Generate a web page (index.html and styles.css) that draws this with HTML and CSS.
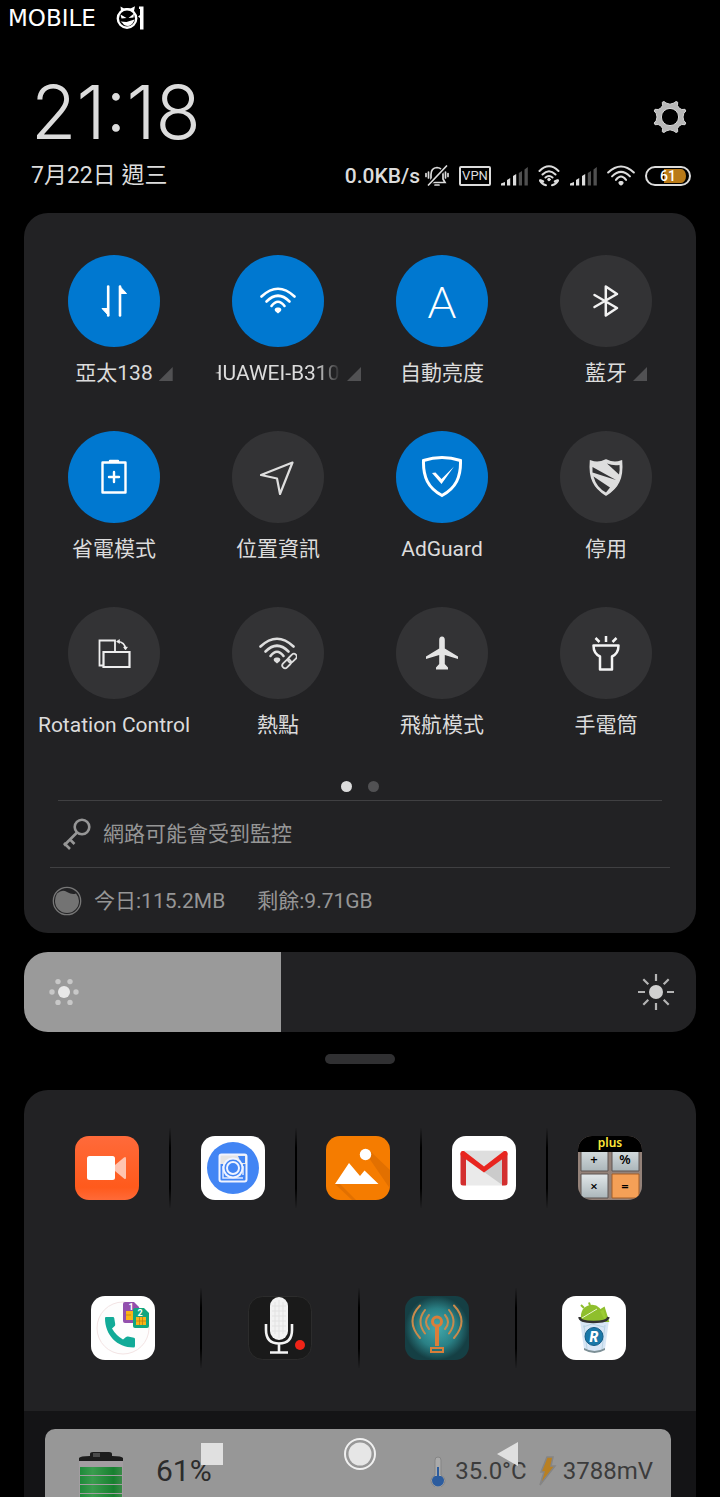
FILE: index.html
```
<!DOCTYPE html>
<html lang="zh-Hant">
<head>
    <meta charset="UTF-8">
    <meta name="viewport" content="width=device-width, initial-scale=1.0">
    <title>控制中心</title>
    <link rel="stylesheet" href="styles.css">
</head>
<body>
    <svg class="defs" width="0" height="0" aria-hidden="true">
        <symbol id="signal" viewBox="0 0 27 20">
            <path d="M0 19.500V17.500L4 16v3.500z M6 14l3.200-2v7.500H6z M12 10l3.200-2v11.500H12z" fill="#dcdcdc"/>
            <path d="M17.800 7L21 5v14.500h-3.200z M23.500 3.500L26.800 1v18.500h-3.300z" fill="#505050"/>
        </symbol>
        <symbol id="wifi" viewBox="0 0 36 28">
            <g fill="none" stroke="currentColor" stroke-width="2.600" stroke-linecap="round">
                <path d="M1.500 9.500Q18 -6 34.500 9.500"/>
                <path d="M6.500 14.500Q18 3 29.500 14.500"/>
                <path d="M11.500 19Q18 10.500 24.500 19"/>
            </g>
            <path d="M18 20.500c3.600 0 4 2.500 2.400 4L18 26.500l-2.400-2c-1.600-1.500-1.200-4 2.400-4z" fill="currentColor"/>
        </symbol>
    </svg>

    <div class="brand">
        <span class="brand-name">MOBILE</span>
        <svg width="28" height="26" viewBox="0 0 28 26">
            <path d="M4.500 1.500L8 3.500Q11 2.500 14.500 3.500L19 1.200 18 6 5 6z" fill="#fff"/>
            <circle cx="11" cy="13.500" r="9.200" fill="#000" stroke="#fff" stroke-width="2.400"/>
            <path d="M4.500 9.500l6 3.500-5 .500z M18 8.500l-5.500 4.500 5-.500z M4.500 16.500l6 .500 8-2.500q-2 6.500-6.500 6.500-4 0-5.500-3z" fill="#fff"/>
            <path d="M23 1.500h4.500v23H24V13l-2-1.500 2-1.500V4h-1z" fill="#fff"/>
        </svg>
    </div>

    <header class="header">
        <div class="clock-row">
            <time class="clock">21:18</time>
            <button class="settings" aria-label="設定">
                <svg width="34" height="34" viewBox="-17 -17 34 34">
                    <path d="M-6 -15.500L-4 -14 0 -12.800 4 -14 6 -15.500 7.700 -14.800 7.500 -11.500 9 -9 11.800 -7.500 15 -7.700 15.800 -6 13.800 -3.600 13 0 13.800 3.600 15.800 6 15 7.700 11.800 7.500 9 9 7.500 11.500 7.700 14.800 6 15.500 4 14 0 12.800 -4 14 -6 15.500 -7.700 14.800 -7.500 11.500 -9 9 -11.800 7.500 -15 7.700 -15.800 6 -13.800 3.600 -13 0 -13.800 -3.600 -15.800 -6 -15 -7.700 -11.800 -7.500 -9 -9 -7.500 -11.500 -7.700 -14.800z" fill="#b8b8b8" stroke="#d6d6d6" stroke-width="1" stroke-linejoin="round"/>
                    <circle r="8.600" fill="#000" stroke="#d6d6d6"/>
                </svg>
            </button>
        </div>
        <div class="status-row">
            <span class="date">7月22日 週三</span>
            <div class="status-icons">
                <span class="speed">0.0KB/s
                    <svg width="24" height="22" viewBox="0 0 24 22" fill="none" stroke="#dcdcdc" stroke-width="1.700" stroke-linecap="round">
                        <path d="M6 15.500V9.500Q6 3 12 2.500 18 3 18 9.500V14l2 3.500H4.500z"/>
                        <path d="M10 20h4"/>
                        <path d="M21.500 1.500L3 20" stroke="#000" stroke-width="4"/>
                        <path d="M21.500 1L3.500 20M3.500 7v6M1 8.500v3M20.500 7v6M23 8.500v3"/>
                    </svg>
                </span>
                <span class="vpn">VPN</span>
                <svg width="27" height="20"><use href="#signal"/></svg>
                <svg width="22" height="22" viewBox="0 0 22 22" fill="none" stroke="#dcdcdc" stroke-width="2" stroke-linecap="round">
                    <path d="M1.500 6Q11 -3.500 20.500 6M4.500 9.500Q11 3 17.500 9.500M7.500 12.500Q11 9.500 14.500 12.500"/>
                    <circle cx="11" cy="14.500" r="1.300" fill="#dcdcdc" stroke-width="1"/>
                    <path d="M2 15.500Q3.500 19 8 20.200M20 15.500Q18.500 19 14 20.200"/>
                    <path d="M2.500 15.500l2.500 1M19.500 15.500l-2.500 1" stroke-width="2.500"/>
                </svg>
                <svg width="27" height="20"><use href="#signal"/></svg>
                <svg width="28" height="22"><use href="#wifi"/></svg>
                <span class="battery">61</span>
            </div>
        </div>
    </header>

    <main>
        <section class="panel toggles-panel">
            <div class="toggles">
                <button class="toggle on">
                    <span class="disc">
                        <svg width="40" height="40" viewBox="0 0 40 40" fill="none" stroke="#fff" stroke-width="2.600" stroke-linecap="round">
                            <path d="M14.200 5.500V34.500"/><path d="M14.500 34.500L8 27.500h6z" fill="#fff" stroke-width="1"/>
                            <path d="M26 34.500V5.500"/><path d="M26 5.500L32.500 12.500h-6z" fill="#fff" stroke-width="1"/>
                        </svg>
                    </span>
                    <span class="label more">亞太138</span>
                </button>
                <button class="toggle on">
                    <span class="disc"><svg width="36" height="28"><use href="#wifi"/></svg></span>
                    <span class="label more"><span class="marquee">HUAWEI-B310</span></span>
                </button>
                <button class="toggle on">
                    <span class="disc"><span class="auto">A</span></span>
                    <span class="label">自動亮度</span>
                </button>
                <button class="toggle">
                    <span class="disc">
                        <svg width="40" height="40" viewBox="0 0 40 40" fill="none" stroke="#f2f2f2" stroke-width="2.500" stroke-linecap="round" stroke-linejoin="round">
                            <path d="M8.500 14L31 27 19.800 34.500V5.500L31 13 8.500 26"/>
                        </svg>
                    </span>
                    <span class="label more">藍牙</span>
                </button>
                <button class="toggle on">
                    <span class="disc">
                        <svg width="40" height="40" viewBox="0 0 40 40" fill="none" stroke="#fff" stroke-width="2.400" stroke-linejoin="round" stroke-linecap="round">
                            <path d="M8.500 5.500h23v30h-23zM16 4h8M20 15v10M15 20h10"/>
                        </svg>
                    </span>
                    <span class="label">省電模式</span>
                </button>
                <button class="toggle">
                    <span class="disc">
                        <svg width="40" height="40" viewBox="0 0 40 40" fill="none" stroke="#dedede" stroke-width="2.200" stroke-linejoin="round">
                            <path d="M34.500 5.500L3 18l16 3.500 3 15.500z"/>
                        </svg>
                    </span>
                    <span class="label">位置資訊</span>
                </button>
                <button class="toggle on">
                    <span class="disc">
                        <svg width="44" height="44" viewBox="0 0 44 44">
                            <path d="M3.500 5.500Q22 -0.500 40.500 5.500C41 22 36 33 22 40.500 8 33 3 22 3.500 5.500z" fill="none" stroke="#fff" stroke-width="3"/>
                            <path d="M12 18l3.500-.5 6 6.500L34 11.500 21.500 29z" fill="#fff"/>
                        </svg>
                    </span>
                    <span class="label">AdGuard</span>
                </button>
                <button class="toggle">
                    <span class="disc">
                        <svg width="36" height="40" viewBox="0 0 36 40">
                            <path d="M2.500 4Q10 7 18 3 26 7 33.500 4C35 21 30 31 18 38 6 31 1 21 2.500 4z" fill="#dedede" stroke="#dedede" stroke-width="1.500"/>
                            <path d="M19 6.500Q25 9 31.500 8 32 13 31 17.500z M4.500 10L28 23 4.500 15.500z M5.500 19.500L22 30.500 18 35.500Q8.500 30.500 5.500 19.500z" fill="#333335"/>
                        </svg>
                    </span>
                    <span class="label">停用</span>
                </button>
                <button class="toggle">
                    <span class="disc">
                        <svg width="40" height="40" viewBox="0 0 40 40" fill="none" stroke="#eee" stroke-width="1.800">
                            <path d="M21 18V7.500H5.500v25H9"/>
                            <path d="M9.500 19h26v15h-26z" stroke-width="2.200"/>
                            <path d="M23.500 8.500Q31 9 31.500 16" stroke-width="1.600"/>
                            <path d="M22.500 8.500l3-2v4z M31.500 17l-2-3h4z" fill="#eee" stroke-width=".5"/>
                        </svg>
                    </span>
                    <span class="label">Rotation Control</span>
                </button>
                <button class="toggle">
                    <span class="disc">
                        <svg width="38" height="34" viewBox="0 0 38 34" color="#dedede">
                            <use href="#wifi" y="1" width="36" height="28"/>
                            <g transform="rotate(-45 30.500 25)">
                                <rect x="20" y="21" width="21" height="8" rx="4" fill="#333335"/>
                                <g fill="none" stroke="#dedede" stroke-width="1.800">
                                    <rect x="21.500" y="22.200" width="10" height="5.600" rx="2.800"/>
                                    <rect x="29.500" y="22.200" width="10" height="5.600" rx="2.800"/>
                                </g>
                            </g>
                        </svg>
                    </span>
                    <span class="label">熱點</span>
                </button>
                <button class="toggle">
                    <span class="disc">
                        <svg width="40" height="40" viewBox="0 0 40 40">
                            <path d="M20 3.500q2.800 0 2.800 3.500v8.500L36 23.500v2.500l-13.200-4v9L26 34.500V36.500H14V34.500l3.200-3.500v-9L4 26v-2.500l13.200-8V7q0-3.500 2.800-3.500z" fill="#e4e4e4"/>
                        </svg>
                    </span>
                    <span class="label">飛航模式</span>
                </button>
                <button class="toggle">
                    <span class="disc">
                        <svg width="40" height="40" viewBox="0 0 40 40" fill="none" stroke="#f4f4f4" stroke-width="2.500" stroke-linejoin="round">
                            <path d="M7.500 12.500h25q0 8-6.500 11V36.500H14V23.500q-6.500-3-6.500-11z"/>
                            <path d="M20 3v6M9.500 5l4 4M30.500 5l-4 4"/>
                        </svg>
                    </span>
                    <span class="label">手電筒</span>
                </button>
            </div>
            <div class="pager"><i class="current"></i><i></i></div>
            <a class="info monitor" href="#">
                <svg width="30" height="32" viewBox="0 0 30 32" fill="none" stroke="#969696" stroke-width="2.600">
                    <circle cx="20" cy="9" r="7.300"/>
                    <path d="M15 14.500L2 27.500M2 25l6 6M7.500 21l5 5"/>
                </svg>
                <span>網路可能會受到監控</span>
            </a>
            <a class="info traffic" href="#">
                <svg width="30" height="30" viewBox="0 0 30 30">
                    <circle cx="15" cy="15" r="13.700" fill="none" stroke="#777" stroke-width="1.300"/>
                    <path d="M5 7.500Q10 3 15 6q5 3 9 1.500Q27 11 27 15a12 12 0 0 1-24 0Q3 11 5 7.500z" fill="#737373"/>
                </svg>
                <span>今日:115.2MB</span>
                <span class="remaining">剩餘:9.71GB</span>
            </a>
        </section>

        <div class="brightness">
            <input type="range" min="0" max="100" value="38" aria-label="亮度" style="--level: 38.2%">
            <svg class="sun-low" width="30" height="30" viewBox="-15 -15 30 30">
                <circle r="6" fill="#e8e8e8"/>
                <g fill="#c8c8c8">
                    <circle cx="-12" r="2.700"/><circle cx="12" r="2.700"/>
                    <circle cx="-6" cy="-10.400" r="2.700"/><circle cx="6" cy="-10.400" r="2.700"/>
                    <circle cx="-6" cy="10.400" r="2.700"/><circle cx="6" cy="10.400" r="2.700"/>
                </g>
            </svg>
            <svg class="sun-high" width="38" height="38" viewBox="-19 -19 38 38">
                <circle r="7" fill="#d0d0d0"/>
                <path d="M0 -18v7M0 18v-7M-18 0h7M18 0h-7M-12.700 -12.700l5 5M12.700 12.700l-5 -5M-12.700 12.700l5 -5M12.700 -12.700l-5 5" stroke="#b4b4b4" stroke-width="2.200"/>
            </svg>
        </div>

        <div class="handle"></div>

        <section class="panel apps">
            <div class="app-row">
                <a href="#" aria-label="螢幕錄影">
                    <svg width="64" height="64" viewBox="0 0 64 64">
                        <defs><linearGradient id="rec" x1="0" y1="0" x2="0" y2="1"><stop offset="0" stop-color="#ff6a3a"/><stop offset=".8" stop-color="#ff5a1c"/><stop offset="1" stop-color="#ff6a38"/></linearGradient></defs>
                        <rect width="64" height="64" rx="14" fill="url(#rec)"/>
                        <rect x="12" y="20" width="28" height="24" rx="2.500" fill="#fff"/>
                        <path d="M40 29l9-7.500q2-1.500 2 1v19q0 2.500-2 1L40 35z" fill="#ffc4b0"/>
                    </svg>
                </a>
                <a href="#" aria-label="相機">
                    <svg width="64" height="64" viewBox="0 0 64 64">
                        <rect width="64" height="64" rx="14" fill="#fff"/>
                        <circle cx="32" cy="32" r="26" fill="#4285f4"/>
                        <path d="M19 19h26v9H19z" fill="#e4e4e4"/>
                        <rect x="18.500" y="18.500" width="27" height="27" rx="2" fill="none" stroke="#f0f4ff" stroke-width="2"/>
                        <path d="M37 20h7v7h-4z" fill="#4285f4"/>
                        <path d="M22 30v12h20M42 30v9" stroke="#dfe9ff" stroke-width="1.500" fill="none"/>
                        <circle cx="32" cy="32" r="10.500" fill="#f0f4ff"/>
                        <circle cx="32" cy="32" r="8.500" fill="#4285f4"/>
                        <circle cx="32" cy="32" r="6" fill="#4285f4" stroke="#f0f4ff" stroke-width="2"/>
                    </svg>
                </a>
                <a href="#" aria-label="相簿">
                    <svg width="64" height="64" viewBox="0 0 64 64">
                        <rect width="64" height="64" rx="14" fill="#f57c00"/>
                        <path d="M43 22l1-7L64 34v14q0 2-.5 4z M9 48h5L30 64H26z" fill="#e27000"/>
                        <circle cx="39.500" cy="18.500" r="5.700" fill="#fff"/>
                        <path d="M9 48L23 27l11 13 4.500-5.500L52.500 48z" fill="#fff"/>
                    </svg>
                </a>
                <a href="#" aria-label="Gmail">
                    <svg width="64" height="64" viewBox="0 0 64 64">
                        <rect width="64" height="64" rx="14" fill="#fff"/>
                        <path d="M12 14.500h40v35H12z" fill="#eaeaea"/>
                        <path d="M12 15h40L32 33z" fill="#dedede"/>
                        <path d="M32 36L51 22v27.500z" fill="#cbcbcb"/>
                        <path d="M8.500 18q0-3 3-3l2.500 5v29.500h-3q-2.500 0-2.500-2.500z M55.500 18q0-3-3-3L50 20v29.500h3q2.500 0 2.500-2.500z" fill="#d32f2f"/>
                        <path d="M8.500 18q0-3.500 3.500-3l20 15.500L52 15q3.500-.5 3.500 3 0 1.500-1.500 2.500L32 36.500 10 20.500Q8.500 19.500 8.500 18z" fill="#e8251f"/>
                    </svg>
                </a>
                <a href="#" aria-label="計算機">
                    <svg width="64" height="64" viewBox="0 0 64 64">
                        <defs>
                            <clipPath id="squircle"><rect width="64" height="64" rx="14"/></clipPath>
                            <linearGradient id="key" x1="0" y1="0" x2="0" y2="1"><stop offset="0" stop-color="#e2e8ea"/><stop offset="1" stop-color="#abb6ba"/></linearGradient>
                        </defs>
                        <g clip-path="url(#squircle)">
                            <path d="M0 0h64v64H0z" fill="#948279"/>
                            <path d="M3 8h27v27H3z" fill="url(#key)" stroke="#5d5552"/>
                            <path d="M34 8h27v27H34z" fill="url(#key)" stroke="#5d5552"/>
                            <path d="M3 38h27v24H3z" fill="url(#key)" stroke="#5d5552"/>
                            <path d="M34 38h27v24H34z" fill="#f4a057" stroke="#a55e28"/>
                            <path d="M0 0h64v16H0z" fill="#000"/>
                        </g>
                        <g text-anchor="middle" class="keys">
                            <text x="32" y="11" class="plus">plus</text>
                            <text x="16" y="28">+</text><text x="47" y="28">%</text>
                            <text x="16" y="55">×</text><text x="47" y="55">=</text>
                        </g>
                    </svg>
                </a>
            </div>
            <div class="app-row">
                <a href="#" aria-label="雙卡電話">
                    <svg width="64" height="64" viewBox="0 0 64 64">
                        <rect width="64" height="64" rx="14" fill="#fff"/>
                        <circle cx="32" cy="32" r="26" fill="#fdfdfd" stroke="#f3e4e4"/>
                        <path d="M14 22q0-1 1-1h7q1 0 1.200 1l1 6q.3 1.500-1 2.500l-2.200 2q4 7 11 11l3-2.500q1-.8 2-.5l6 1.200q1 .3 1 1.300v7q0 1.500-1.500 1.500C26 51.500 14 39 14 22z" fill="#12ab98"/>
                        <path d="M32 8q0-2 2-2h9l5 5v16H34q-2 0-2-2z" fill="#9350ad"/><path d="M35 15h8v9h-8z" fill="#fbb416"/>
                        <path d="M42 14q0-2 2-2h9l5 5v13q0 2-2 2H44q-2 0-2-2z" fill="#12a67f"/><path d="M45 21h10v8H45z" fill="#fbb416"/>
                        <path d="M35 19h5M48.500 21v8M51.500 21v8M45 25h10" stroke="#b87b10" fill="none" stroke-width=".7"/>
                        <g class="sim" text-anchor="middle"><text x="40" y="14">1</text><text x="49" y="20">2</text></g>
                    </svg>
                </a>
                <a href="#" aria-label="錄音">
                    <svg width="64" height="64" viewBox="0 0 64 64">
                        <rect x=".5" y=".5" width="63" height="63" rx="14" fill="#1a1a1a" stroke="#2c2c2c"/>
                        <rect x="22" y="1" width="18" height="43" rx="9" fill="#f2f2f2"/>
                        <path d="M24 10h14M24 15h14M24 20h14M24 25h14M24 30h14M24 35h14M27 6v32M31 4v38M35 6v32" stroke="#e2e2e2" fill="none"/>
                        <path d="M18 28v6q0 13.500 13 13.500T44 34v-6M31 47v9M22 56.500h18" stroke="#f4f4f4" stroke-width="2.600" fill="none"/>
                        <circle cx="52" cy="49" r="5" fill="#f02418"/>
                    </svg>
                </a>
                <a href="#" aria-label="訊號">
                    <svg width="64" height="64" viewBox="0 0 64 64">
                        <defs><radialGradient id="teal"><stop offset="0" stop-color="#43a9ac"/><stop offset=".6" stop-color="#2a8085"/><stop offset="1" stop-color="#153f44"/></radialGradient></defs>
                        <rect width="64" height="64" rx="14" fill="url(#teal)"/>
                        <g fill="none" stroke="#c98a4c" stroke-width="2" stroke-linecap="round">
                            <path d="M15 9.500Q0 25 15 42M20 14q-9 11.500 0 23.500M24 19q-6 7 0 14M49 9.500Q64 25 49 42M44 14q9 11.500 0 23.500M40 19q6 7 0 14"/>
                        </g>
                        <g fill="none" stroke="#d97e3a">
                            <circle cx="32" cy="25.500" r="4.500" stroke-width="3"/>
                            <path d="M32 30.500V50" stroke-width="4"/><path d="M26 52h12v4H26z" stroke-width="2"/>
                        </g>
                    </svg>
                </a>
                <a href="#" aria-label="解除安裝">
                    <svg width="64" height="64" viewBox="0 0 64 64">
                        <rect width="64" height="64" rx="14" fill="#fff"/>
                        <path d="M18 24h29l-4 29q-10.500 6-21 0z" fill="#d8e6f5"/>
                        <path d="M22 29l3 24M43 29l-3 24M21 31l9-3 12 3" stroke="#b8d4e4" fill="none"/>
                        <path d="M22 52q10.500 6 21 0v2q-10.500 6-21 0z" fill="#7d9097"/>
                        <path d="M19 23Q18 11 28 9t15 13l-2 4H21z" fill="#8fbf2c"/>
                        <path d="M22 12l-3-3M28 9.500l-1-3M37 15l5-3 4 13h-4z" stroke="#8fbf2c" stroke-width="2" fill="#9ccc35"/>
                        <path d="M20 22l15-9" stroke="#e9f5cf"/>
                        <path d="M17.500 21q0 5 14 5t15-5" fill="none" stroke="#333" stroke-width="2.400"/>
                        <circle cx="32" cy="40.500" r="9" fill="#1a78a8" stroke="#135b85"/>
                        <text x="32" y="45.500" text-anchor="middle" class="r-mark">R</text>
                    </svg>
                </a>
            </div>
        </section>

        <section class="notifications">
            <article class="card">
                <svg class="cell" width="46" height="60" viewBox="0 0 46 60">
                    <defs><linearGradient id="cell" x1="0" x2="1"><stop offset="0" stop-color="#1e8a3a"/><stop offset=".3" stop-color="#3a9c4e"/><stop offset=".8" stop-color="#17802f"/><stop offset="1" stop-color="#3a8a48"/></linearGradient></defs>
                    <path d="M1 6Q2 4 12 4V2q0-2 3-2h16q3 0 3 2v2q10 0 11 2v4H1z" fill="#1c1c1c"/>
                    <path d="M15 1h7v4h-7z" fill="#4a4a4a"/>
                    <path d="M1 9h44v51H1z" fill="#a39da1"/>
                    <g fill="url(#cell)">
                        <rect x="2" y="15" width="42" height="8"/><rect x="2" y="24" width="42" height="8"/>
                        <rect x="2" y="33" width="42" height="8"/><rect x="2" y="42" width="42" height="18"/>
                    </g>
                </svg>
                <span class="percent">61%</span>
                <svg width="16" height="32" viewBox="0 0 16 32">
                    <path d="M8 2q3 0 3 3v15q4 2 4 5.500a6.500 6.500 0 0 1-14 0Q1 22 5 20V5q0-3 3-3z" fill="#aaa" stroke="#858585"/>
                    <path d="M7 12h2v9h2q3 1.500 3 4.500a6 6 0 0 1-12 0q0-3 3-4.500h2z" fill="#2c5c9e"/>
                </svg>
                <span class="reading">35.0°C</span>
                <svg width="20" height="32" viewBox="0 0 20 32">
                    <path d="M10 2h6l-2 9h4L3 30l4-13H4z" fill="#b98022" stroke="#858585" stroke-width="1.500"/>
                </svg>
                <span class="reading">3788mV</span>
            </article>
        </section>
    </main>

    <nav class="navbar">
        <button aria-label="最近"><svg width="34" height="34" viewBox="0 0 34 34"><path d="M6 6h22v22H6z" fill="#e0e0e0"/></svg></button>
        <button aria-label="主畫面"><svg width="34" height="34" viewBox="0 0 34 34"><circle cx="17" cy="17" r="15" fill="none" stroke="#f0f0f0" stroke-width="2"/><circle cx="17" cy="17" r="11.500" fill="#e6e6e6"/></svg></button>
        <button aria-label="返回"><svg width="34" height="34" viewBox="0 0 34 34"><path d="M6 17L27 5v24z" fill="#e0e0e0"/></svg></button>
    </nav>
</body>
</html>
```
FILE: styles.css
```
* {
    box-sizing: border-box;
}
body {
    margin: 0;
    height: 100vh;
    display: flex;
    flex-direction: column;
    overflow: hidden;
    background: #000;
    color: #dcdcdc;
    font-family: Roboto, "Noto Sans CJK TC", sans-serif;
    font-size: 21px;
    line-height: 24px;
}
button {
    padding: 0;
    border: none;
    background: none;
    color: inherit;
    font: inherit;
    cursor: pointer;
}
a {
    color: inherit;
    text-decoration: none;
}
svg {
    display: block;
    flex: none;
}
.defs {
    position: absolute;
}

/* top */
.brand {
    display: flex;
    align-items: center;
    justify-content: space-between;
    width: 136px;
    height: 36px;
    margin-left: 8px;
    color: #fff;
}
.brand-name {
    font-family: "DejaVu Sans", sans-serif;
    font-size: 23px;
}
.header {
    padding: 30px 29px 0 31px;
    margin-bottom: 19px;
}
.clock-row {
    display: flex;
    align-items: center;
    justify-content: space-between;
    height: 92px;
    padding-right: 4px;
}
.clock {
    font-family: Inter, sans-serif;
    font-size: 74px;
    font-weight: 300;
    line-height: 88px;
}
.settings {
    margin-top: 10px;
}
.status-row {
    display: flex;
    align-items: center;
    justify-content: space-between;
    height: 36px;
}
.date {
    font-size: 23px;
}
.status-icons {
    display: flex;
    align-items: center;
    gap: 10px;
}
.speed {
    display: flex;
    align-items: center;
    gap: 5px;
    font-size: 21px;
    font-weight: 500;
}
.vpn {
    width: 32px;
    border: 2px solid #dcdcdc;
    border-radius: 2px;
    font-size: 13px;
    font-weight: 400;
    line-height: 16px;
    text-align: center;
}
.battery {
    width: 46px;
    border: 2px solid #dcdcdc;
    border-radius: 10px;
    background: linear-gradient(90deg, #000 40%, #b97a18 40%) content-box;
    padding: 1px 3px;
    color: #fff;
    font-size: 14px;
    font-weight: 500;
    line-height: 14px;
    text-align: center;
}

/* quick settings */
main {
    flex: 1;
    display: flex;
    flex-direction: column;
    padding: 0 24px;
    min-height: 0;
}
.panel {
    flex: none;
    background: #222224;
    border-radius: 24px;
}
.toggles-panel {
    padding-top: 42px;
}
.toggles {
    display: grid;
    grid-template-columns: repeat(4, minmax(0, 1fr));
    row-gap: 46px;
    padding: 0 8px;
}
.toggle {
    display: flex;
    flex-direction: column;
    align-items: center;
    gap: 14px;
}
.disc {
    display: flex;
    align-items: center;
    justify-content: center;
    width: 92px;
    height: 92px;
    border-radius: 50%;
    background: #333335;
    color: #fff;
}
.on .disc {
    background: #0078d0;
}
.auto {
    font-family: Lato, sans-serif;
    font-size: 44px;
    font-weight: 300;
    line-height: 44px;
}
.label {
    position: relative;
    white-space: nowrap;
}
.more::after {
    content: "";
    position: absolute;
    left: calc(100% + 6px);
    top: 6px;
    width: 14px;
    height: 14px;
    background: #515153;
    clip-path: polygon(100% 0, 100% 100%, 0 100%);
}
.marquee {
    display: block;
    width: 126px;
    overflow: hidden;
    text-indent: -9px;
    -webkit-mask-image: linear-gradient(90deg, transparent, #000 4px, #000 80%, transparent);
    mask-image: linear-gradient(90deg, transparent, #000 4px, #000 80%, transparent);
}
.pager {
    display: flex;
    justify-content: center;
    gap: 16px;
    padding: 44px 0 8px;
}
.pager i {
    width: 11px;
    height: 11px;
    border-radius: 50%;
    background: #515153;
}
.pager .current {
    background: #dcdcdc;
}
.info {
    display: flex;
    align-items: center;
    height: 66px;
    border-top: 1px solid #404042;
    color: #969696;
}
.monitor {
    height: 67px;
    margin: 0 34px;
    padding-left: 4px;
    gap: 11px;
}
.traffic {
    margin: 0 26px;
    padding-left: 2px;
    gap: 12px;
}
.remaining {
    margin-left: 20px;
}

/* brightness */
.brightness {
    flex: none;
    position: relative;
    height: 80px;
    margin-top: 19px;
}
.brightness input {
    -webkit-appearance: none;
    appearance: none;
    display: block;
    width: 100%;
    height: 100%;
    margin: 0;
    border-radius: 24px;
    background: linear-gradient(90deg, #9a9a9a var(--level), #222224 var(--level));
}
.brightness input::-webkit-slider-thumb {
    -webkit-appearance: none;
    width: 1px;
    height: 80px;
}
.brightness svg {
    position: absolute;
    top: 0;
    bottom: 0;
    margin: auto;
    pointer-events: none;
}
.sun-low {
    left: 25px;
}
.sun-high {
    right: 21px;
}
.handle {
    flex: none;
    width: 70px;
    height: 10px;
    margin: 22px auto 26px;
    border-radius: 5px;
    background: #303032;
}

/* app shortcuts */
.apps {
    display: flex;
    flex-direction: column;
    gap: 80px;
    padding: 38px 24px 43px 21px;
    border-radius: 24px 24px 0 0;
}
.app-row {
    display: flex;
    height: 80px;
}
.app-row a {
    flex: 1;
    display: flex;
    align-items: center;
    justify-content: center;
}
.app-row a + a {
    border-left: 2px solid;
    border-image: linear-gradient(transparent, #000 25%, #000 75%, transparent) 1;
}
.keys {
    font-family: "Noto Sans", sans-serif;
    font-size: 13px;
    font-weight: 600;
}
.plus {
    fill: #ffe93a;
    font-size: 12px;
}
.sim {
    fill: #fff;
    font-size: 9px;
    font-weight: 700;
}
.r-mark {
    fill: #fff;
    font-size: 14px;
    font-style: italic;
    font-weight: 900;
}

/* notification */
.notifications {
    flex: 1 0 86px;
    padding: 18px 25px 0 21px;
    background: #141416;
}
.card {
    display: flex;
    align-items: center;
    height: 120px;
    padding: 0 18px 36px 33px;
    border-radius: 10px;
    background: #979797;
    color: #3c3c3c;
}
.cell {
    align-self: flex-start;
    margin-top: 23px;
}
.percent {
    margin: 0 auto 0 32px;
    color: #2c2c2c;
    font-size: 30px;
}
.reading {
    margin: 0 10px 0 9px;
    font-size: 24px;
}
.reading:last-child {
    margin: 0 0 0 6px;
}
.navbar {
    position: fixed;
    left: 0;
    right: 0;
    bottom: 0;
    display: flex;
    justify-content: center;
    gap: 114px;
    height: 86px;
}
```
